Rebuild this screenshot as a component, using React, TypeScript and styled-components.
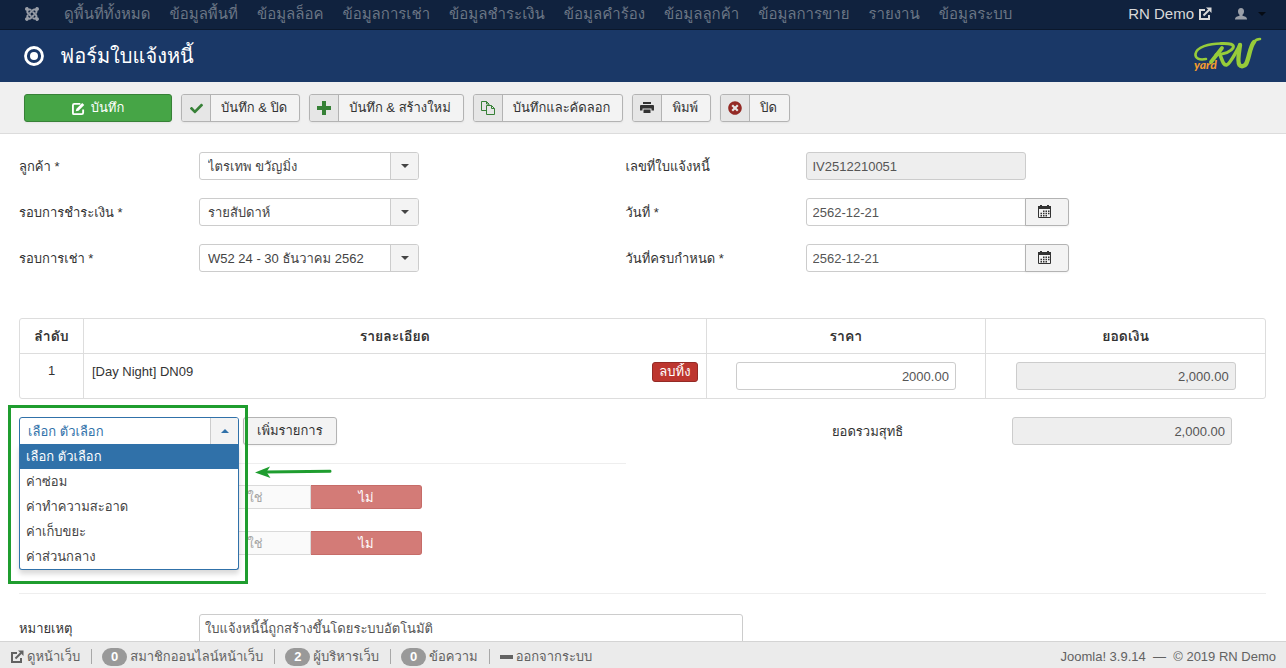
import React, { useState } from "react";
import styled, { createGlobalStyle, css } from "styled-components";
import { FaCheck, FaJoomla, FaTimesCircle } from "react-icons/fa";

const GlobalStyle = createGlobalStyle`
  *, *::before, *::after { box-sizing: border-box; }
  body {
    margin: 0;
    background: #fff;
    color: #333;
    font-family: "Liberation Sans", Loma, Garuda, "Noto Sans Thai", sans-serif;
    font-size: 13px;
    line-height: 18px;
  }
  button, input, select, textarea { font: inherit; color: inherit; margin: 0; }
  a { color: inherit; text-decoration: none; }
`;

const Shell = styled.div`
  display: flex;
  flex-direction: column;
  height: 100vh;
`;

const TopBar = styled.nav`
  display: flex;
  align-items: center;
  flex: none;
  height: 30px;
  padding: 0 20px 2px 24px;
  background: #10223e;
  border-bottom: 1px solid #0b182c;
  color: #6b7685;
  font-size: 15px;
  line-height: 18px;
  white-space: nowrap;
`;

const Brand = styled.a`
  display: flex;
  margin-right: 24px;
  color: #9a9fa8;
`;

const Menu = styled.ul`
  display: flex;
  flex: 1;
  gap: 19px;
  margin: 0;
  padding: 0;
  list-style: none;
`;

const SiteLink = styled.a`
  display: flex;
  align-items: center;
  gap: 4px;
  color: #d9d9d9;
`;

const UserButton = styled.button`
  display: flex;
  align-items: center;
  gap: 11px;
  margin-left: 23px;
  padding: 0;
  border: 0;
  background: none;
  color: #9a9fa8;
`;

const Caret = styled.span<{ $up?: boolean; $color?: string }>`
  width: 0;
  height: 0;
  border: 4px solid transparent;
  ${({ $up, $color = "#444" }) =>
    $up
      ? css`border-top-width: 0; border-bottom-color: ${$color};`
      : css`border-bottom-width: 0; border-top-color: ${$color};`}
`;

const Header = styled.header`
  display: flex;
  align-items: center;
  flex: none;
  gap: 16px;
  height: 52px;
  padding: 0 24px;
  background: #1a3867;
  color: #fff;
`;

const PageTitle = styled.h1`
  flex: 1;
  margin: 0;
  font-size: 20px;
  font-weight: normal;
  line-height: 32px;
`;

const Toolbar = styled.div`
  display: flex;
  flex: none;
  gap: 9px;
  height: 52px;
  padding: 12px 24px;
  background: #f0f0f0;
  border-bottom: 1px solid #dcdcdc;
  white-space: nowrap;
`;

const buttonFrame = css`
  display: flex;
  align-items: center;
  justify-content: center;
  height: 28px;
  border: 1px solid #b3b3b3;
  border-radius: 3px;
  background: #f3f3f3;
  color: #333;
  line-height: 20px;
  box-shadow: 0 1px 2px rgba(0, 0, 0, 0.05);
`;

const PrimaryButton = styled.button`
  ${buttonFrame}
  gap: 6px;
  width: 148px;
  border-color: #378137;
  background: #46a546;
  color: #fff;
`;

const ToolButton = styled.button<{ $tone?: string }>`
  ${buttonFrame}
  padding: 0 12px 0 0;
  gap: 10px;

  > span {
    display: flex;
    align-items: center;
    justify-content: center;
    width: 29px;
    height: 26px;
    border-right: 1px solid #b3b3b3;
    border-radius: 2px 0 0 2px;
    background: #e6e6e6;
    color: ${({ $tone = "#333" }) => $tone};
  }
`;

const AddButton = styled.button`
  ${buttonFrame}
  padding: 0 13px;
`;

const Content = styled.main`
  flex: 1;
  min-height: 0;
  overflow: auto;
  scrollbar-width: none;
  padding: 18px 20px 0 19px;
`;

const Columns = styled.div`
  display: grid;
  grid-template-columns: 1fr 1fr;
  padding-right: 34px;
`;

const Fields = styled.div`
  display: flex;
  flex-direction: column;
  gap: 18px;
`;

const Field = styled.div`
  display: flex;
  align-items: center;
  min-height: 28px;
`;

const FieldLabel = styled.label`
  flex: none;
  width: 180px;
  padding-top: 2px;
`;

const SelectBox = styled.div`
  position: relative;
  display: flex;
  width: 220px;
`;

const Select = styled.select<{ $open?: boolean }>`
  width: 100%;
  height: 28px;
  padding: 2px 36px 0 8px;
  appearance: none;
  border: 1px solid ${({ $open }) => ($open ? "#3071a9" : "#ccc")};
  border-radius: ${({ $open }) => ($open ? "3px 3px 0 0" : "3px")};
  background: #fff;
  color: ${({ $open }) => ($open ? "#3071a9" : "#444")};
`;

const SelectArrow = styled.span`
  position: absolute;
  top: 1px;
  right: 1px;
  bottom: 1px;
  display: flex;
  align-items: center;
  justify-content: center;
  width: 28px;
  border-left: 1px solid #ccc;
  border-radius: 0 2px 2px 0;
  background: #f3f3f3;
  pointer-events: none;
`;

const Options = styled.ul`
  position: absolute;
  z-index: 2;
  top: 100%;
  left: 0;
  right: 0;
  margin: -1px 0 0;
  padding: 0;
  border: 1px solid #3071a9;
  border-top: 0;
  border-radius: 0 0 3px 3px;
  background: #fff;
  box-shadow: 0 4px 5px rgba(0, 0, 0, 0.15);
  color: #444;
  list-style: none;
`;

const Option = styled.li<{ $active: boolean }>`
  height: 25px;
  padding: 0 6px;
  line-height: 25px;
  ${({ $active }) => $active && css`background: #3071a9; color: #fff;`}
`;

const TextInput = styled.input<{ $numeric?: boolean; $joined?: boolean }>`
  width: 220px;
  height: 28px;
  padding: 0 6px;
  border: 1px solid #ccc;
  border-radius: ${({ $joined }) => ($joined ? "3px 0 0 3px" : "3px")};
  background: #fff;
  color: #555;
  text-align: ${({ $numeric }) => ($numeric ? "right" : "left")};
  &:read-only { background: #eee; }
`;

const DateButton = styled.button`
  ${buttonFrame}
  width: 44px;
  margin-left: -1px;
  padding: 0 10px 2px 6px;
  border-radius: 0 3px 3px 0;
`;

const ItemTable = styled.table`
  width: 100%;
  margin-top: 46px;
  table-layout: fixed;
  border: 1px solid #ddd;
  border-radius: 3px;
  border-spacing: 0;

  th, td {
    height: 44px;
    padding: 8px;
    vertical-align: top;
    text-align: center;
  }
  th { height: 34px; font-size: 14px; }
  td { border-top: 1px solid #ddd; }
  th + th, td + td { border-left: 1px solid #ddd; }
  th:nth-child(1) { width: 63px; }
  th:nth-child(2) { width: 50%; }
`;

const ItemDetail = styled.div`
  display: flex;
  justify-content: space-between;
  line-height: 20px;
`;

const DeleteButton = styled.button`
  height: 20px;
  padding: 0 6px;
  border: 1px solid #942a25;
  border-radius: 3px;
  background: #bd362f;
  color: #fff;
  line-height: 18px;
  overflow: hidden;
`;

const PickerRow = styled.div`
  position: relative;
  display: flex;
  gap: 4px;
`;

const SummaryRow = styled(Columns)`
  margin-top: 18px;
`;

const Total = styled(Field)`
  justify-content: flex-end;
`;

const Divider = styled.hr`
  margin: 18px 0 20px;
  border: 0;
  border-top: 1px solid #eee;
`;

const Callout = styled.div`
  position: absolute;
  z-index: 3;
  top: -12px;
  left: -11px;
  width: 240px;
  height: 179px;
  border: 3px solid #1f9d2f;
  pointer-events: none;
`;

const CalloutArrow = styled.svg`
  position: absolute;
  z-index: 3;
  top: 48px;
  left: 236px;
  pointer-events: none;
`;

const Toggles = styled.div`
  display: flex;
  flex-direction: column;
  gap: 22px;
  padding: 1px 0 20px 180px;
`;

const Toggle = styled.div`
  display: flex;
  width: 223px;
`;

const ToggleOption = styled.label<{ $on: boolean }>`
  flex: 1;
  height: 24px;
  border: 1px solid #dadada;
  border-radius: 3px 0 0 3px;
  background: #fafafa;
  color: #a6a6a6;
  line-height: 24px;
  text-align: center;
  & + & { border-left: 0; border-radius: 0 3px 3px 0; }
  ${({ $on }) => $on && css`border-color: #c66c68; background: #d37b77; color: #fff;`}
  input { position: absolute; opacity: 0; pointer-events: none; }
`;

const NoteField = styled.div`
  display: flex;
  padding-bottom: 40px;
  label { padding-top: 6px; }
`;

const Note = styled.textarea`
  width: 544px;
  max-width: 100%;
  height: 80px;
  padding: 5px;
  resize: none;
  border: 1px solid #ccc;
  border-radius: 3px;
  color: #555;
`;

const StatusBar = styled.footer`
  display: flex;
  align-items: center;
  justify-content: space-between;
  flex: none;
  height: 27px;
  padding: 3px 10px 0;
  background: #ebebeb;
  border-top: 1px solid #d4d4d4;
  color: #626262;
  white-space: nowrap;
`;

const StatusList = styled.div`
  display: flex;
  align-items: center;
`;

const StatusItem = styled.a`
  display: flex;
  align-items: center;
  gap: 3px;
  & + & {
    margin-left: 11px;
    padding-left: 10px;
    border-left: 1px solid #a8a8a8;
    height: 15px;
  }
`;

const Badge = styled.span`
  height: 18px;
  min-width: 25px;
  border-radius: 9px;
  background: #999;
  color: #fff;
  font-weight: bold;
  line-height: 18px;
  text-align: center;
`;

function ExternalIcon() {
  return (
    <svg width="14" height="14" viewBox="0 0 14 14" fill="none" stroke="currentColor" strokeWidth="2">
      <path d="M7 3H2v9h9V8" />
      <path d="M5.500 8.500 11 3" />
      <path d="M8 .500h5.500V6z" fill="currentColor" stroke="none" />
    </svg>
  );
}

function EditIcon() {
  return (
    <svg width="13" height="13" viewBox="0 0 14 14" fill="none" stroke="currentColor" strokeWidth="2">
      <path d="M9 2H2.500A1.500 1.500 0 0 0 1 3.500V12a1 1 0 0 0 1 1h8.500A1.500 1.500 0 0 0 12 11.500V8" />
      <path d="M4 10 4.800 7.200 11 1l2.200 2.200L7 9.400z" fill="currentColor" stroke="none" />
    </svg>
  );
}

function PlusIcon() {
  return (
    <svg width="14" height="14" viewBox="0 0 14 14" fill="currentColor">
      <path d="M5 0h4v5h5v4H9v5H5V9H0V5h5z" />
    </svg>
  );
}

function CopyIcon() {
  return (
    <svg width="14" height="14" viewBox="0 0 14 14" fill="none" stroke="currentColor" strokeWidth="1">
      <path d="M5 9.500H.5v-9h5L8 3v1" />
      <path d="M5.500.5V3H8M5.500 4.500h5l3 3v6h-8zM10.500 4.500v3h3" />
    </svg>
  );
}

function PrintIcon() {
  return (
    <svg width="14" height="14" viewBox="0 0 14 14" fill="currentColor">
      <path d="M3 1h8v2H3zM1 4h12a1 1 0 0 1 1 1v4.500h-2.500V7.500h-9v2H0V5a1 1 0 0 1 1-1z" />
      <path d="M3.500 8.500h7V12h-7z" />
    </svg>
  );
}

function CalendarIcon() {
  return (
    <svg width="13" height="13" viewBox="0 0 13 13" fill="currentColor">
      <path d="M0 1h2V0h2v1h5V0h2v1h2v3H0z" />
      <path d="M.5 4v8.500h12V4" fill="none" stroke="currentColor" />
      <path d="M5 5.500h1.500V7H5zM7.500 5.500H9V7H7.500zM10 5.500h1.500V7H10zM2.500 7.800H4v1.400H2.500zM5 7.800h1.500v1.400H5zM7.500 7.800H9v1.400H7.500zM10 7.800h1.500v1.400H10zM2.500 10H4v1.500H2.500zM5 10h1.500v1.500H5zM7.500 10H9v1.500H7.500z" />
    </svg>
  );
}

function UserIcon() {
  return (
    <svg width="12" height="12" viewBox="0 0 12 12" fill="currentColor">
      <path d="M6 0c2 0 3 1.300 3 3.200C9 5 8.300 6.200 7.500 6.800v1C9.500 8.300 12 9 12 11v.5H0V11c0-2 2.500-2.700 4.500-3.200v-1C3.700 6.200 3 5 3 3.200 3 1.300 4 0 6 0z" />
    </svg>
  );
}

function Logo() {
  return (
    <svg width="68" height="37" viewBox="0 0 68 37" fill="none" role="img" aria-label="RN yard" overflow="visible">
      <g stroke="#97cc3a" strokeLinecap="round" strokeLinejoin="round">
        <path d="M12 21C5 22.500 1 20 1.500 16 2.500 9 15 5.500 27 5.500" strokeWidth="2.600" />
        <path d="M27 5.500c9-.5 14 1 12 4.500-2 3.600-9 6-17 6.800" strokeWidth="3" />
        <path d="M28 10c-3 4-7 9-11 14" strokeWidth="3.800" />
        <path d="M26 17c2 4 3 10.500 6.500 10C36 26 41 16 46 7" strokeWidth="3.600" />
        <path d="M46 7c-1 7-3 17-.5 20 1.500 2 5 1.500 6.500-1C55 21 56 8 60 4" strokeWidth="4.400" />
        <path d="M60 4c2-2.500 4-3 6-3" strokeWidth="2.600" />
      </g>
      <text x="0" y="31" fill="#f29b2e" fontFamily="Lato, sans-serif" fontSize="12" fontWeight="900" fontStyle="italic">
        yard
      </text>
    </svg>
  );
}

const menuItems = [
  "ดูพื้นที่ทั้งหมด", "ข้อมูลพื้นที่", "ข้อมูลล็อค", "ข้อมูลการเช่า", "ข้อมูลชำระเงิน",
  "ข้อมูลคำร้อง", "ข้อมูลลูกค้า", "ข้อมูลการขาย", "รายงาน", "ข้อมูลระบบ",
];

const feeOptions = ["เลือก ตัวเลือก", "ค่าซ่อม", "ค่าทำความสะอาด", "ค่าเก็บขยะ", "ค่าส่วนกลาง"];

function SelectField({ id, label, value }: { id: string; label: string; value: string }) {
  return (
    <Field>
      <FieldLabel htmlFor={id}>{label}</FieldLabel>
      <SelectBox>
        <Select id={id}><option>{value}</option></Select>
        <SelectArrow><Caret /></SelectArrow>
      </SelectBox>
    </Field>
  );
}

function DateField({ id, label, value }: { id: string; label: string; value: string }) {
  return (
    <Field>
      <FieldLabel htmlFor={id}>{label}</FieldLabel>
      <TextInput id={id} $joined defaultValue={value} />
      <DateButton type="button" aria-label={label}><CalendarIcon /></DateButton>
    </Field>
  );
}

function YesNo({ name }: { name: string }) {
  const [yes, setYes] = useState(false);
  return (
    <Toggle role="radiogroup">
      <ToggleOption $on={yes}>
        <input type="radio" name={name} checked={yes} onChange={() => setYes(true)} />ใช่
      </ToggleOption>
      <ToggleOption $on={!yes}>
        <input type="radio" name={name} checked={!yes} onChange={() => setYes(false)} />ไม่
      </ToggleOption>
    </Toggle>
  );
}

function FeePicker() {
  const [fee, setFee] = useState(feeOptions[0]);
  const [open, setOpen] = useState(true);
  return (
    <SelectBox>
      <Select
        $open={open}
        aria-label={feeOptions[0]}
        value={fee}
        onMouseDown={(e) => { e.preventDefault(); setOpen(!open); }}
        onChange={(e) => setFee(e.target.value)}
      >
        {feeOptions.map((o) => <option key={o}>{o}</option>)}
      </Select>
      <SelectArrow><Caret $up={open} $color="#3071a9" /></SelectArrow>
      {open && (
        <Options role="listbox">
          {feeOptions.map((o) => (
            <Option key={o} role="option" aria-selected={o === fee} $active={o === fee} onClick={() => { setFee(o); setOpen(false); }}>
              {o}
            </Option>
          ))}
        </Options>
      )}
    </SelectBox>
  );
}

export default function App() {
  return (
    <Shell>
      <GlobalStyle />
      <TopBar>
        <Brand href="#" aria-label="Joomla"><FaJoomla size={16} /></Brand>
        <Menu>
          {menuItems.map((m) => <li key={m}><a href="#">{m}</a></li>)}
        </Menu>
        <SiteLink href="#">RN Demo <ExternalIcon /></SiteLink>
        <UserButton type="button" aria-label="User"><UserIcon /><Caret $color="#050b14" /></UserButton>
      </TopBar>
      <Header>
        <svg width="20" height="20" viewBox="0 0 20 20" fill="none">
          <circle cx="10" cy="10" r="8.500" stroke="currentColor" strokeWidth="2.800" />
          <circle cx="10" cy="10" r="4" fill="currentColor" />
        </svg>
        <PageTitle>ฟอร์มใบแจ้งหนี้</PageTitle>
        <Logo />
      </Header>
      <Toolbar>
        <PrimaryButton type="button"><EditIcon />บันทึก</PrimaryButton>
        <ToolButton type="button" $tone="#378137"><span><FaCheck size={13} /></span>บันทึก &amp; ปิด</ToolButton>
        <ToolButton type="button" $tone="#378137"><span><PlusIcon /></span>บันทึก &amp; สร้างใหม่</ToolButton>
        <ToolButton type="button" $tone="#378137"><span><CopyIcon /></span>บันทึกและคัดลอก</ToolButton>
        <ToolButton type="button"><span><PrintIcon /></span>พิมพ์</ToolButton>
        <ToolButton type="button" $tone="#942a25"><span><FaTimesCircle size={14} /></span>ปิด</ToolButton>
      </Toolbar>
      <Content>
        <Columns>
          <Fields>
            <SelectField id="customer" label="ลูกค้า *" value="ไตรเทพ ขวัญมิ่ง" />
            <SelectField id="cycle" label="รอบการชำระเงิน *" value="รายสัปดาห์" />
            <SelectField id="period" label="รอบการเช่า *" value="W52 24 - 30 ธันวาคม 2562" />
          </Fields>
          <Fields>
            <Field>
              <FieldLabel htmlFor="number">เลขที่ใบแจ้งหนี้</FieldLabel>
              <TextInput id="number" readOnly value="IV2512210051" />
            </Field>
            <DateField id="date" label="วันที่ *" value="2562-12-21" />
            <DateField id="due" label="วันที่ครบกำหนด *" value="2562-12-21" />
          </Fields>
        </Columns>
        <ItemTable>
          <thead>
            <tr><th>ลำดับ</th><th>รายละเอียด</th><th>ราคา</th><th>ยอดเงิน</th></tr>
          </thead>
          <tbody>
            <tr>
              <td>1</td>
              <td><ItemDetail>[Day Night] DN09<DeleteButton type="button">ลบทิ้ง</DeleteButton></ItemDetail></td>
              <td><TextInput $numeric aria-label="ราคา" defaultValue="2000.00" /></td>
              <td><TextInput $numeric aria-label="ยอดเงิน" readOnly value="2,000.00" /></td>
            </tr>
          </tbody>
        </ItemTable>
        <SummaryRow>
          <div>
            <PickerRow>
              <FeePicker />
              <AddButton type="button">เพิ่มรายการ</AddButton>
              <Callout />
              <CalloutArrow width="78" height="14" viewBox="0 0 78 14" fill="#1f9d2f">
                <path d="M0 7.500 15 1.500l-3.500 5.500 4 6z" />
                <path d="M10 7 75 6.200" stroke="#1f9d2f" strokeWidth="3" strokeLinecap="round" />
              </CalloutArrow>
            </PickerRow>
            <Divider />
            <Toggles><YesNo name="vat" /><YesNo name="tax" /></Toggles>
          </div>
          <div>
            <Total>
              <FieldLabel htmlFor="total">ยอดรวมสุทธิ</FieldLabel>
              <TextInput id="total" $numeric readOnly value="2,000.00" />
            </Total>
          </div>
        </SummaryRow>
        <Divider />
        <NoteField>
          <FieldLabel htmlFor="note">หมายเหตุ</FieldLabel>
          <Note id="note" defaultValue="ใบแจ้งหนี้นี้ถูกสร้างขึ้นโดยระบบอัตโนมัติ" />
        </NoteField>
      </Content>
      <StatusBar>
        <StatusList>
          <StatusItem href="#"><ExternalIcon />ดูหน้าเว็บ</StatusItem>
          <StatusItem href="#"><Badge>0</Badge>สมาชิกออนไลน์หน้าเว็บ</StatusItem>
          <StatusItem href="#"><Badge>2</Badge>ผู้บริหารเว็บ</StatusItem>
          <StatusItem href="#"><Badge>0</Badge>ข้อความ</StatusItem>
          <StatusItem href="#">
            <svg width="13" height="4" viewBox="0 0 13 4"><path d="M0 0h13v4H0z" fill="currentColor" /></svg>
            ออกจากระบบ
          </StatusItem>
        </StatusList>
        <span>Joomla! 3.9.14&nbsp; — &nbsp;© 2019 RN Demo</span>
      </StatusBar>
    </Shell>
  );
}
